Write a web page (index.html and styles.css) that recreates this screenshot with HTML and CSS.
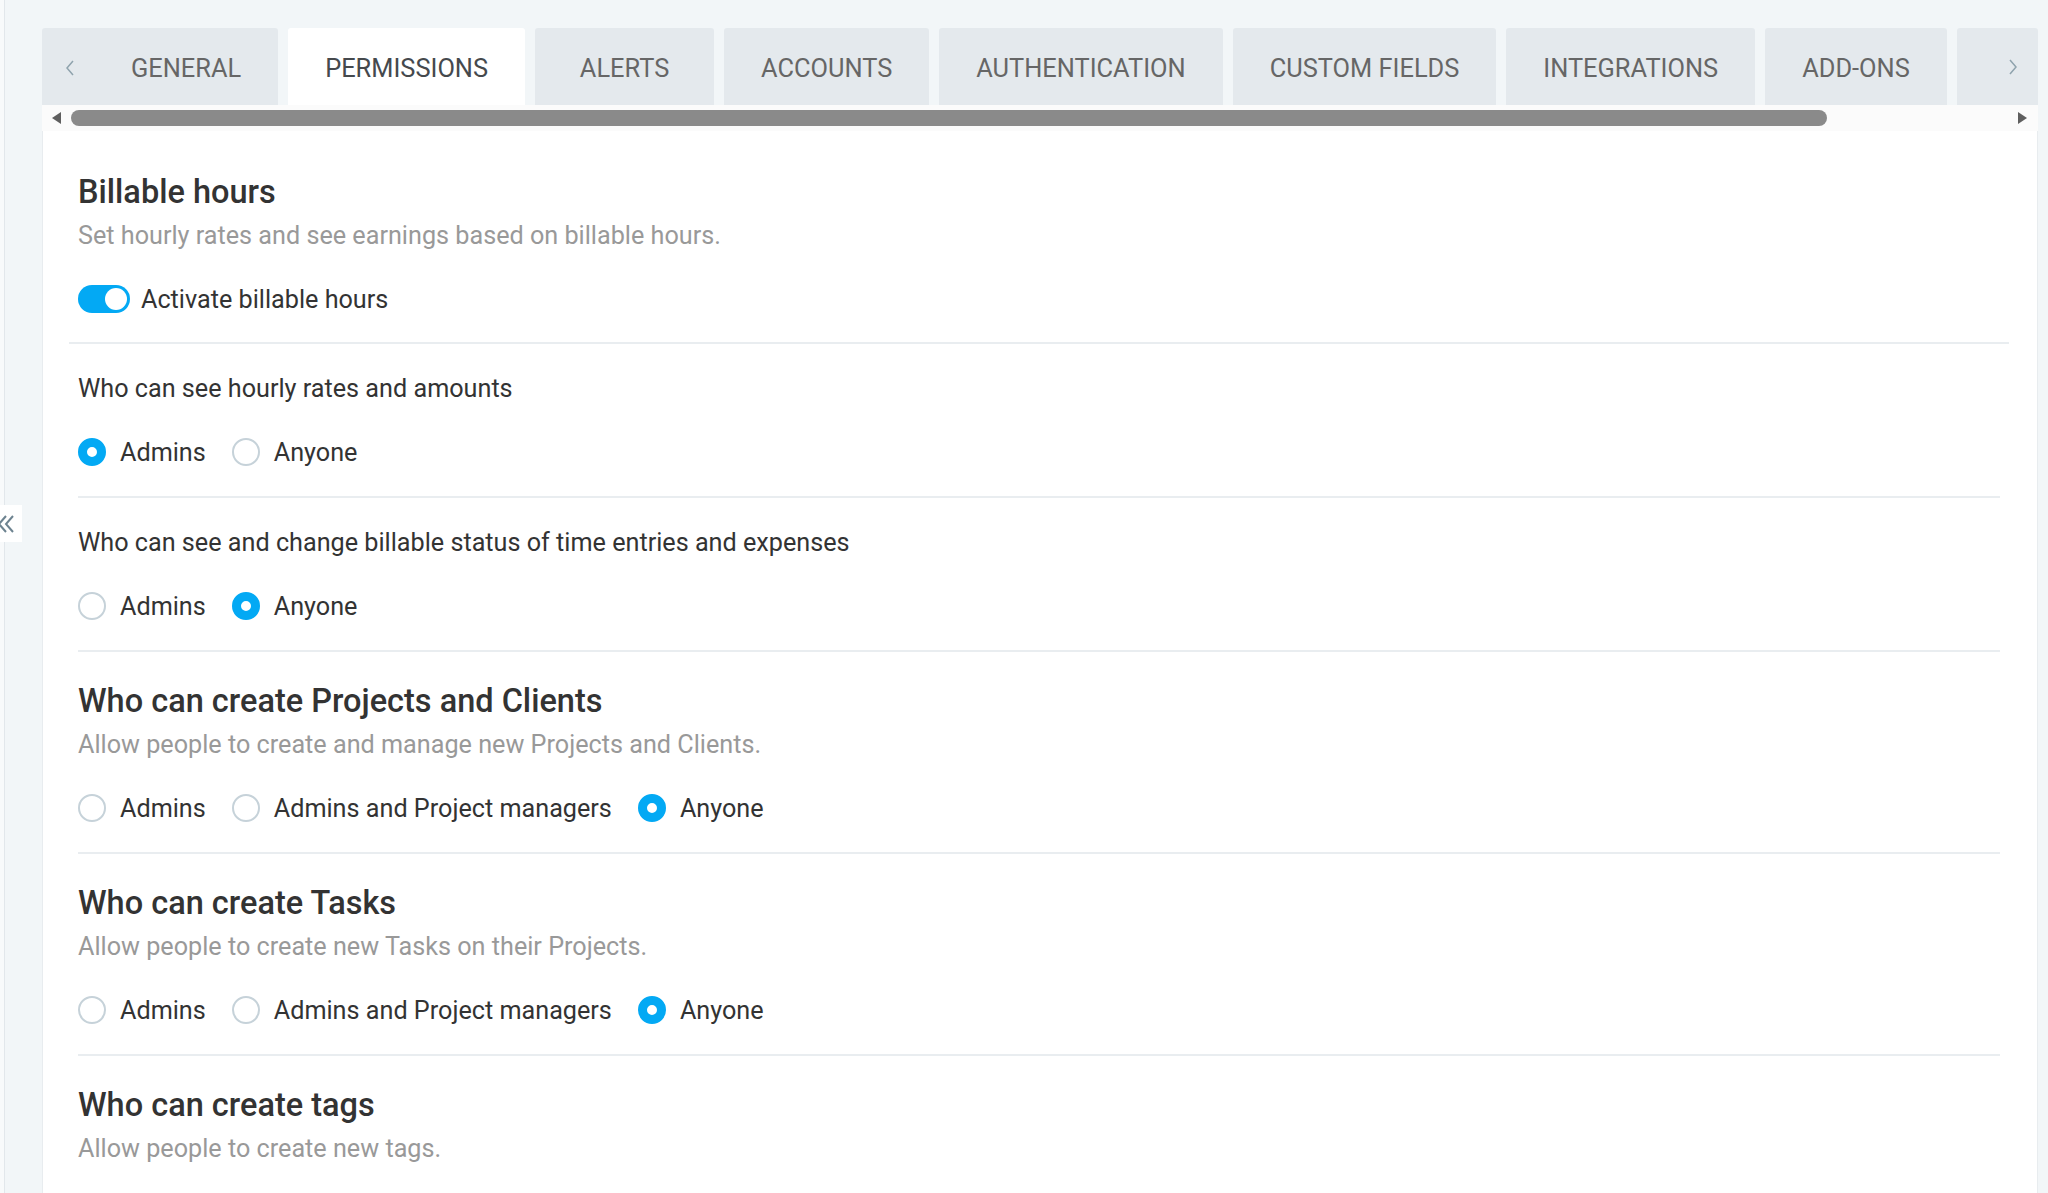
FILE: index.html
```html
<!DOCTYPE html>
<html lang="en">
<head>
  <meta charset="UTF-8">
  <meta name="viewport" content="width=device-width, initial-scale=1.0">
  <title>Workspace settings</title>
  <link rel="stylesheet" href="styles.css">
</head>
<body>
  <aside class="sidebar">
    <button class="sidebar-toggle" title="Expand">
      <svg width="22" height="20" viewBox="0 0 22 20">
        <polyline points="6,2 -1,10 6,18" fill="none" stroke="#6d8390" stroke-width="2"/>
        <polyline points="13,2 6,10 13,18" fill="none" stroke="#6d8390" stroke-width="2"/>
      </svg>
    </button>
  </aside>

  <main class="main">
    <nav class="tabs">
      <a class="tab tab-first">
        <span class="tab-arrow">
          <svg width="8" height="16" viewBox="0 0 8 16"><polyline points="7,1 1,8 7,15" fill="none" stroke="#8fa3ad" stroke-width="1.5"/></svg>
        </span>GENERAL</a>
      <a class="tab active">PERMISSIONS</a>
      <a class="tab">ALERTS</a>
      <a class="tab">ACCOUNTS</a>
      <a class="tab">AUTHENTICATION</a>
      <a class="tab">CUSTOM FIELDS</a>
      <a class="tab">INTEGRATIONS</a>
      <a class="tab">ADD-ONS</a>
      <a class="tab tab-last">
        <svg width="8" height="16" viewBox="0 0 8 16"><polyline points="1,1 7,8 1,15" fill="none" stroke="#8fa3ad" stroke-width="1.5"/></svg>
      </a>
    </nav>
    <div class="scrollbar">
      <span class="scroll-btn left"></span>
      <div class="scroll-track"><div class="scroll-thumb"></div></div>
      <span class="scroll-btn right"></span>
    </div>

    <div class="card">
      <section class="setting setting-main">
        <h2>Billable hours</h2>
        <p class="desc">Set hourly rates and see earnings based on billable hours.</p>
        <label class="switch-row">
          <span class="switch on"><span class="knob"></span></span>
          Activate billable hours
        </label>
      </section>

      <section class="setting">
        <p class="label">Who can see hourly rates and amounts</p>
        <div class="options">
          <label class="option"><span class="radio checked"></span>Admins</label>
          <label class="option"><span class="radio"></span>Anyone</label>
        </div>
      </section>

      <section class="setting">
        <p class="label">Who can see and change billable status of time entries and expenses</p>
        <div class="options">
          <label class="option"><span class="radio"></span>Admins</label>
          <label class="option"><span class="radio checked"></span>Anyone</label>
        </div>
      </section>

      <section class="setting">
        <h2>Who can create Projects and Clients</h2>
        <p class="desc">Allow people to create and manage new Projects and Clients.</p>
        <div class="options">
          <label class="option"><span class="radio"></span>Admins</label>
          <label class="option"><span class="radio"></span>Admins and Project managers</label>
          <label class="option"><span class="radio checked"></span>Anyone</label>
        </div>
      </section>

      <section class="setting">
        <h2>Who can create Tasks</h2>
        <p class="desc">Allow people to create new Tasks on their Projects.</p>
        <div class="options">
          <label class="option"><span class="radio"></span>Admins</label>
          <label class="option"><span class="radio"></span>Admins and Project managers</label>
          <label class="option"><span class="radio checked"></span>Anyone</label>
        </div>
      </section>

      <section class="setting setting-last">
        <h2>Who can create tags</h2>
        <p class="desc">Allow people to create new tags.</p>
      </section>
    </div>
  </main>
</body>
</html>
```

FILE: styles.css
```css
body {
  font-family: Roboto, "Liberation Sans", sans-serif;
  margin: 0;
  height: 100vh;
  overflow: hidden;
  display: flex;
  background-color: #F2F6F8;
  color: #333;
}

.sidebar {
  position: relative;
  width: 4px;
  flex-shrink: 0;
  background-color: #F8FAFB;
  border-right: 1px solid #E2E7EB;
}

.sidebar-toggle {
  position: absolute;
  top: 505px;
  left: 0;
  width: 22px;
  height: 37px;
  padding: 0;
  border: none;
  background-color: white;
  display: flex;
  align-items: center;
  overflow: hidden;
  cursor: pointer;
}

.main {
  flex: 1;
  min-width: 0;
  padding: 28px 10px 0 37px;
}

/* tabs */
.tabs {
  display: flex;
  gap: 10px;
  height: 77px;
  overflow: hidden;
}

.tab {
  display: flex;
  align-items: center;
  justify-content: center;
  flex-shrink: 0;
  min-width: 179px;
  box-sizing: border-box;
  padding: 2px 37px 0;
  background-color: #E4E9ED;
  border-radius: 3px 3px 0 0;
  color: #666;
  font-size: 25.4px;
  cursor: pointer;
}

.tab.active {
  background-color: white;
  color: #45494D;
}

.tab-first {
  padding-left: 24px;
}

.tab-arrow {
  display: inline-flex;
  margin-right: 57px;
}

.tab-last {
  flex: 1;
  min-width: 0;
  justify-content: flex-start;
  padding: 0 0 0 52px;
}

/* fake horizontal scrollbar */
.scrollbar {
  display: flex;
  align-items: center;
  height: 26px;
  background-color: #FBFBFB;
  padding: 0 11px 0 10px;
  gap: 10px;
}

.scroll-btn {
  width: 0;
  height: 0;
  border-top: 6px solid transparent;
  border-bottom: 6px solid transparent;
}

.scroll-btn.left {
  border-right: 9px solid #5F5F5F;
}

.scroll-btn.right {
  border-left: 9px solid #5F5F5F;
}

.scroll-track {
  flex: 1;
  height: 16px;
}

.scroll-thumb {
  width: 1756px;
  height: 16px;
  border-radius: 8px;
  background-color: #8A8A8A;
}

/* settings card */
.card {
  background-color: white;
  border: 1px solid #E8ECEF;
  border-top: none;
  padding: 11px 28px 0 26px;
  min-height: 100%;
}

.setting {
  margin: 0 9px;
  padding: 29px 0;
  border-bottom: 2px solid #E9EDF0;
}

.setting-main {
  margin: 0;
  padding: 30px 9px 28px;
}

.setting-last {
  border-bottom: none;
}

.setting h2 {
  margin: 0;
  font-size: 32.5px;
  font-weight: 500;
  line-height: 40px;
  color: #333;
}

.setting .desc {
  margin: 8px 0 0;
  font-size: 25.2px;
  line-height: 32px;
  color: #999;
}

.setting .label {
  margin: 0;
  font-size: 25.2px;
  line-height: 32px;
  color: #333;
}

.switch-row {
  display: flex;
  align-items: center;
  gap: 11px;
  margin-top: 32px;
  height: 30px;
  font-size: 25.2px;
}

.switch {
  position: relative;
  width: 52px;
  height: 28px;
  border-radius: 14px;
  background-color: #C6D2D9;
}

.switch.on {
  background-color: #03A9F4;
}

.switch .knob {
  position: absolute;
  top: 3px;
  left: 3px;
  width: 22px;
  height: 22px;
  border-radius: 50%;
  background-color: white;
}

.switch.on .knob {
  left: 27px;
}

.options {
  display: flex;
  gap: 26px;
  margin-top: 32px;
  height: 30px;
}

.option {
  display: flex;
  align-items: center;
  gap: 14px;
  font-size: 25.2px;
  cursor: pointer;
}

.radio {
  width: 28px;
  height: 28px;
  box-sizing: border-box;
  border-radius: 50%;
  border: 2px solid #C6D2D9;
  background-color: white;
}

.radio.checked {
  border: 9px solid #03A9F4;
}
```
